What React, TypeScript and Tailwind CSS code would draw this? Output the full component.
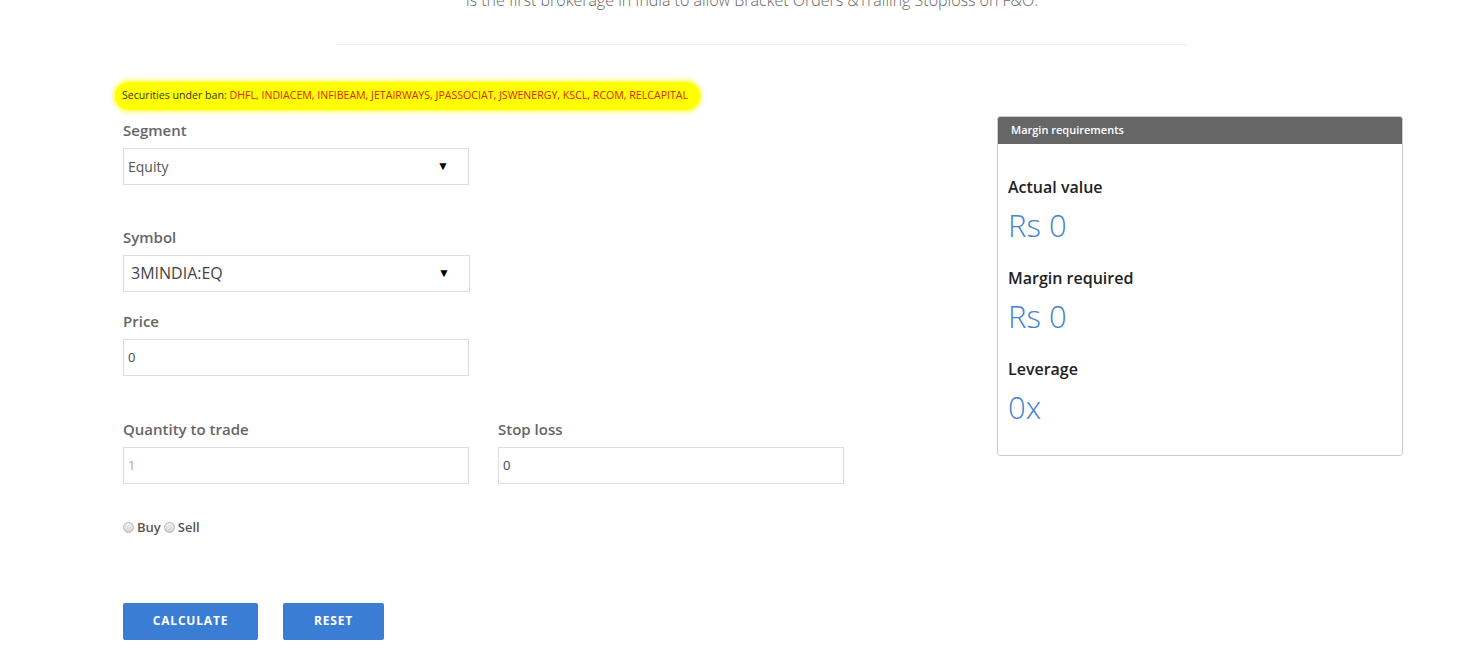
const banned = 'DHFL, INDIACEM, INFIBEAM, JETAIRWAYS, JPASSOCIAT, JSWENERGY, KSCL, RCOM, RELCAPITAL';

function Label({ children }: { children: React.ReactNode }) {
  return <div className="h-[20px] leading-[20px] text-[15px] font-semibold text-[#666] mb-[8px]">{children}</div>;
}

function Select({ value, big }: { value: string; big?: boolean }) {
  return (
    <div className={(big ? 'w-[347px]' : 'w-[346px]') + ' h-[37px] border border-[#ddd] flex items-center justify-between pr-[19px] bg-white'}>
      <span className={big ? 'pl-[7px] text-[16px] text-[#444]' : 'pl-[4px] text-[14px] text-[#555]'}>{value}</span>
      <span className="text-[12px] text-black leading-none">▼</span>
    </div>
  );
}

function Input({ value, faint }: { value: string; faint?: boolean }) {
  return (
    <div className="w-[346px] h-[37px] border border-[#ddd] flex items-center pl-[4px] bg-white">
      <span className={faint ? 'text-[13px] text-[#aaa]' : 'text-[13px] text-[#444]'}>{value}</span>
    </div>
  );
}

function Radio({ label }: { label: string }) {
  return (
    <label className="flex items-center gap-[3px]">
      <span className="w-[11px] h-[11px] rounded-full border border-[#b5b5b5] bg-gradient-to-b from-[#f2f2f2] to-[#d4d4d4]" />
      <span className="text-[13px] font-semibold text-[#555]">{label}</span>
    </label>
  );
}

function Stat({ label, value }: { label: string; value: string }) {
  return (
    <div>
      <div className="h-[22px] leading-[22px] text-[16px] font-semibold text-[#222]">{label}</div>
      <div className="mt-[7px] h-[40px] leading-[40px] text-[31px] font-light text-[#4683d1]">{value}</div>
    </div>
  );
}

export default function App() {
  return (
    <div className="min-h-screen bg-white overflow-hidden font-['Open_Sans',sans-serif]">
      <div className="ml-[337px] w-[830px] -mt-[11px] h-[22px] leading-[22px] text-center text-[16px] font-light text-[#666] whitespace-nowrap">
        is the first brokerage in India to allow Bracket Orders &amp;Trailing Stoploss on F&amp;O.
      </div>
      <div className="ml-[337px] w-[850px] mt-[33px] border-t border-[#eee]" />

      <div className="ml-[115px] mt-[36px]">
        <div className="inline-flex items-center h-[28px] pl-[7px] pr-[12px] rounded-[14px] bg-[#ffff00] shadow-[0_0_4px_2px_#ffff44] text-[10.6px] whitespace-nowrap">
          <span className="text-[#333]">Securities under ban:&nbsp;</span>
          <span className="text-[#e0241b]">{banned}</span>
        </div>
      </div>

      <div className="flex mt-[6px]">
        <div className="ml-[123px] w-[722px] pt-[4px]">
          <Label>Segment</Label>
          <Select value="Equity" />

          <div className="mt-[42px]">
            <Label>Symbol</Label>
            <Select value="3MINDIA:EQ" big />
          </div>

          <div className="mt-[19px]">
            <Label>Price</Label>
            <Input value="0" />
          </div>

          <div className="mt-[43px] flex gap-[29px]">
            <div>
              <Label>Quantity to trade</Label>
              <Input value="1" faint />
            </div>
            <div>
              <Label>Stop loss</Label>
              <Input value="0" />
            </div>
          </div>

          <div className="mt-[34px] h-[20px] flex items-center gap-[3px]">
            <Radio label="Buy" />
            <Radio label="Sell" />
          </div>

          <div className="mt-[65px] flex gap-[25px]">
            <button className="w-[135px] h-[37px] bg-[#3a7dd4] rounded-[2px] text-white text-[12px] font-bold tracking-[0.8px]">CALCULATE</button>
            <button className="w-[101px] h-[37px] bg-[#3a7dd4] rounded-[2px] text-white text-[12px] font-bold tracking-[0.8px]">RESET</button>
          </div>
        </div>

        <div className="ml-[152px] w-[406px] h-[340px] border border-[#ccc] rounded-[3px] overflow-hidden">
          <div className="h-[27px] bg-[#666] flex items-center pl-[13px] text-[11px] font-semibold text-white">Margin requirements</div>
          <div className="pl-[10px] pt-[32px] flex flex-col gap-[22px]">
            <Stat label="Actual value" value="Rs 0" />
            <Stat label="Margin required" value="Rs 0" />
            <Stat label="Leverage" value="0x" />
          </div>
        </div>
      </div>
    </div>
  );
}
